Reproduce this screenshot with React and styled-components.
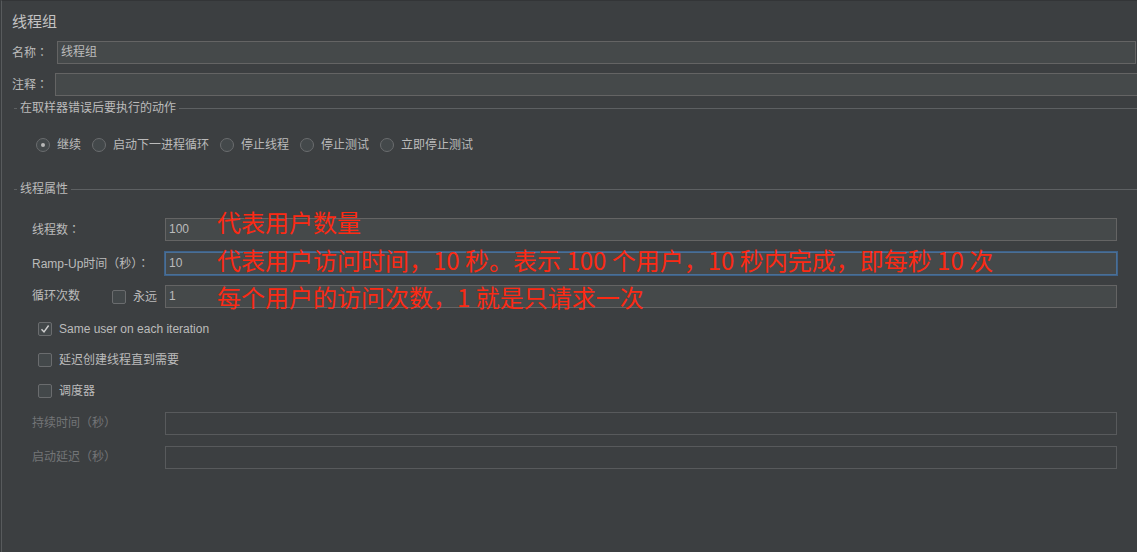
import React from "react";
import styled, { createGlobalStyle } from "styled-components";

const GlobalStyle = createGlobalStyle`
  html, body { margin: 0; padding: 0; background: #393c3e; }
  body {
    font-family: "Liberation Sans", "Noto Sans CJK SC", sans-serif;
    font-size: 12px;
    color: #bbbbbb;
    overflow: hidden;
  }
`;

const Panel = styled.div`
  margin-left: 1px;
  height: 552px;
  box-sizing: border-box;
  border-left: 1px solid #585b5d;
  border-top: 1px solid #333537;
  background: #3c3f41;
  padding-left: 10px;
  display: flex;
  flex-direction: column;
  overflow: hidden;
`;

const Title = styled.div`
  margin-top: 11px;
  font-size: 15px;
  line-height: 20px;
  color: #c4c4c4;
`;

const FieldRow = styled.div`
  display: flex;
  align-items: center;
  height: 23px;
  margin-top: 9px;
  margin-right: ${(p) => p.$right}px;
`;

const FieldLabel = styled.span`
  width: ${(p) => p.$w}px;
  flex: none;
  line-height: 23px;
  color: ${(p) => (p.$disabled ? "#737577" : "#bbbbbb")};
`;

const Colon = styled.span`
  font-family: "Noto Sans CJK TC", sans-serif;
`;

const TextInput = styled.div`
  flex: 1;
  height: 23px;
  box-sizing: border-box;
  border: 1px solid ${(p) => (p.$focus ? "#4a6f96" : p.$disabled ? "#585a5c" : "#646464")};
  box-shadow: ${(p) => (p.$focus ? "0 0 0 1px #3e6289" : "none")};
  background: ${(p) => (p.$disabled ? "#3c3f41" : "#45494a")};
  padding: 0 3px;
  line-height: 21px;
  color: #bbbbbb;
  white-space: nowrap;
`;

const GroupHeader = styled.div`
  display: flex;
  align-items: center;
  height: 14px;
  margin-top: ${(p) => p.$top}px;
  margin-left: 2px;
  gap: 3px;
  &::before {
    content: "";
    width: 3px;
    height: 1px;
    background: #5d6062;
  }
  &::after {
    content: "";
    flex: 1;
    height: 1px;
    background: #5d6062;
  }
`;

const GroupTitle = styled.span`
  color: #bbbbbb;
  line-height: 14px;
`;

const RadioRow = styled.div`
  display: flex;
  align-items: center;
  gap: 11px;
  margin-top: 23px;
  padding-left: 24px;
  height: 14px;
`;

const Option = styled.label`
  display: flex;
  align-items: center;
  gap: 7px;
  line-height: 14px;
  color: #bbbbbb;
`;

const RadioCircle = styled.span`
  width: 14px;
  height: 14px;
  box-sizing: border-box;
  border-radius: 50%;
  border: 1px solid #6a6c6e;
  background: #43484a;
  display: flex;
  align-items: center;
  justify-content: center;
  flex: none;
  &::after {
    content: "";
    width: 4px;
    height: 4px;
    border-radius: 50%;
    background: ${(p) => (p.$on ? "#b8b8b8" : "transparent")};
  }
`;

const CheckBox = styled.span`
  width: 14px;
  height: 14px;
  box-sizing: border-box;
  border-radius: 2px;
  border: 1px solid #6a6c6e;
  background: #43484a;
  display: flex;
  align-items: center;
  justify-content: center;
  flex: none;
`;

const ThreadSection = styled.div`
  display: flex;
  flex-direction: column;
  padding-left: 20px;
  padding-right: 20px;
`;

const PropRow = styled.div`
  display: grid;
  grid-template-columns: 133px 1fr;
  align-items: center;
  height: 23px;
  margin-top: ${(p) => p.$top}px;
`;

const LoopLabel = styled.div`
  display: flex;
  align-items: center;
  line-height: 23px;
`;

const LoopText = styled.span`
  width: 80px;
`;

const InputCell = styled.div`
  position: relative;
  display: flex;
  height: 23px;
`;

const Annotation = styled.span`
  position: absolute;
  left: 52px;
  top: ${(p) => p.$top}px;
  font-family: "Noto Sans CJK SC", sans-serif;
  font-size: 24px;
  line-height: 24px;
  color: #fb2a14;
  white-space: nowrap;
  pointer-events: none;
`;

const CheckList = styled.div`
  display: flex;
  flex-direction: column;
  gap: 17px;
  margin-top: 14px;
  padding-left: 6px;
`;

const CheckRow = styled(Option)`
  height: 14px;
`;

const Check = ({ on }) => (
  <CheckBox>
    {on && (
      <svg width="10" height="10" viewBox="0 0 10 10">
        <path d="M1.5 5.2 L4 8 L8.6 1.5" fill="none" stroke="#cfcfcf" strokeWidth="1.4" />
      </svg>
    )}
  </CheckBox>
);

const radios = ["继续", "启动下一进程循环", "停止线程", "停止测试", "立即停止测试"];

export default function App() {
  return (
    <>
      <GlobalStyle />
      <Panel>
        <Title>线程组</Title>
        <FieldRow $right={1}>
          <FieldLabel $w={45}>
            名称<Colon>：</Colon>
          </FieldLabel>
          <TextInput>线程组</TextInput>
        </FieldRow>
        <FieldRow $right={-6}>
          <FieldLabel $w={43}>
            注释<Colon>：</Colon>
          </FieldLabel>
          <TextInput />
        </FieldRow>

        <GroupHeader $top={5}>
          <GroupTitle>在取样器错误后要执行的动作</GroupTitle>
        </GroupHeader>
        <RadioRow>
          {radios.map((r, i) => (
            <Option key={r}>
              <RadioCircle $on={i === 0} />
              {r}
            </Option>
          ))}
        </RadioRow>

        <GroupHeader $top={30}>
          <GroupTitle>线程属性</GroupTitle>
        </GroupHeader>

        <ThreadSection>
          <PropRow $top={21}>
            <FieldLabel>
              线程数<Colon>：</Colon>
            </FieldLabel>
            <InputCell>
              <TextInput>100</TextInput>
              <Annotation $top={-8}>代表用户数量</Annotation>
            </InputCell>
          </PropRow>
          <PropRow $top={11}>
            <FieldLabel>
              Ramp-Up时间（秒）<Colon>：</Colon>
            </FieldLabel>
            <InputCell>
              <TextInput $focus>10</TextInput>
              <Annotation $top={-4}>
                代表用户访问时间，10 秒。表示 100 个用户，10 秒内完成，即每秒 10 次
              </Annotation>
            </InputCell>
          </PropRow>
          <PropRow $top={11}>
            <LoopLabel>
              <LoopText>循环次数</LoopText>
              <Option>
                <Check />
                永远
              </Option>
            </LoopLabel>
            <InputCell>
              <TextInput>1</TextInput>
              <Annotation $top={0}>每个用户的访问次数，1 就是只请求一次</Annotation>
            </InputCell>
          </PropRow>

          <CheckList>
            <CheckRow>
              <Check on />
              Same user on each iteration
            </CheckRow>
            <CheckRow>
              <Check />
              延迟创建线程直到需要
            </CheckRow>
            <CheckRow>
              <Check />
              调度器
            </CheckRow>
          </CheckList>

          <PropRow $top={14}>
            <FieldLabel $disabled>持续时间（秒）</FieldLabel>
            <InputCell>
              <TextInput $disabled />
            </InputCell>
          </PropRow>
          <PropRow $top={11}>
            <FieldLabel $disabled>启动延迟（秒）</FieldLabel>
            <InputCell>
              <TextInput $disabled />
            </InputCell>
          </PropRow>
        </ThreadSection>
      </Panel>
    </>
  );
}
